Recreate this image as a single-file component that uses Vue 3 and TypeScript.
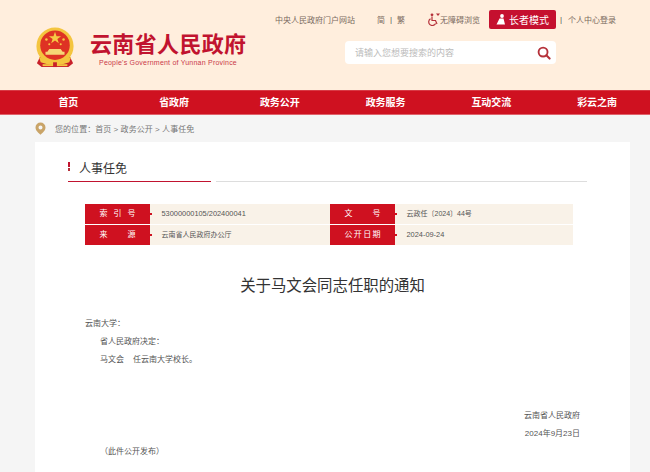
<script setup lang="ts">
const navItems: string[] = ['首页', '省政府', '政务公开', '政务服务', '互动交流', '彩云之南']
</script>

<template>
  <div class="page">
    <header class="header">
      <div class="brand">
        <svg class="emblem" width="40" height="42" viewBox="0 0 42 44">
          <path d="M6 30 L2 38 L7 42 H35 L40 38 L36 30 Z" fill="#c8202a" />
          <circle cx="21" cy="20" r="19.5" fill="#f4c53f" />
          <circle cx="21" cy="19" r="15.5" fill="#de3224" />
          <polygon points="21,5 22.6,9.6 27.4,9.6 23.5,12.5 25,17 21,14.2 17,17 18.5,12.5 14.6,9.6 19.4,9.6" fill="#f6c945" />
          <circle cx="12" cy="13" r="1.3" fill="#f6c945" />
          <circle cx="30" cy="13" r="1.3" fill="#f6c945" />
          <circle cx="15" cy="18" r="1.1" fill="#f6c945" />
          <circle cx="27" cy="18" r="1.1" fill="#f6c945" />
          <path d="M15 23 H27 L29 26 H31 V29 H11 V26 H13 Z" fill="#f6d675" />
          <path d="M4 31 Q21 42 38 31 L36 37 Q21 43 6 37 Z" fill="#f4c53f" />
          <path d="M8 39 H34 V41 H8 Z" fill="#f4c53f" />
          <path d="M19 37 H23 V42 H19 Z" fill="#c8202a" />
        </svg>
        <div class="brand-text">
          <div class="brand-cn">云南省人民政府</div>
          <div class="brand-en">People's Government of Yunnan Province</div>
        </div>
      </div>
      <div class="tools">
        <div class="toolbar">
          <span class="tool portal">中央人民政府门户网站</span>
          <span class="tool lang">简<i class="sep">|</i>繁</span>
          <span class="tool access">
            <svg width="12" height="13" viewBox="0 0 12 13">
              <circle cx="4" cy="1.8" r="1.4" fill="#b5313a" />
              <path d="M4 3.5 V7.5 H7.5 L9 11 M2.5 5.8 A3.6 3.6 0 1 0 7.6 10.4" fill="none" stroke="#b5313a" stroke-width="1.2" />
              <path d="M8 0.6 H12 L10 3 Z" fill="#b5313a" />
            </svg>
            无障碍浏览
          </span>
          <span class="elder">
            <svg width="10" height="11" viewBox="0 0 10 11">
              <circle cx="6" cy="2" r="1.9" fill="#fff" />
              <path d="M3.5 4.5 H7.5 L9 10.5 H0.5 Z" fill="#fff" />
            </svg>
            长者模式
          </span>
          <span class="tool login"><i class="sep login-sep">|</i>个人中心登录</span>
        </div>
        <div class="search">
          <span class="placeholder">请输入您想要搜索的内容</span>
          <svg width="14" height="14" viewBox="0 0 15 15">
            <circle cx="6.5" cy="6.5" r="4.8" fill="none" stroke="#b5313a" stroke-width="2" />
            <path d="M10 10 L13.5 13.5" stroke="#b5313a" stroke-width="2.2" stroke-linecap="round" />
          </svg>
        </div>
      </div>
    </header>

    <nav class="nav">
      <a v-for="item in navItems" :key="item" class="nav-item">{{ item }}</a>
    </nav>

    <div class="crumbs">
      <svg width="11" height="13" viewBox="0 0 11 13">
        <path d="M5.5 0.5 A5 5 0 0 1 10.5 5.5 C10.5 8.5 7.5 11 5.5 12.8 C3.5 11 0.5 8.5 0.5 5.5 A5 5 0 0 1 5.5 0.5 Z M5.5 3.5 A2 2 0 1 0 5.5 7.5 A2 2 0 1 0 5.5 3.5 Z" fill="#c9a468" fill-rule="evenodd" />
      </svg>
      <span class="crumb-text">您的位置：首页 &gt; 政务公开 &gt; 人事任免</span>
    </div>

    <main class="card">
      <div class="section-head">
        <div class="section-title">
          <span class="mark"><i></i><i></i></span>
          人事任免
        </div>
        <div class="section-line"></div>
      </div>

      <div class="meta">
        <div class="meta-row">
          <div class="label"><span class="spread">索 引 号</span></div>
          <div class="value num">53000000105/202400041</div>
          <div class="label"><span class="spread">文 号</span></div>
          <div class="value">云政任〔2024〕44号</div>
        </div>
        <div class="meta-row">
          <div class="label"><span class="spread">来 源</span></div>
          <div class="value">云南省人民政府办公厅</div>
          <div class="label"><span class="spread">公开日期</span></div>
          <div class="value num">2024-09-24</div>
        </div>
      </div>

      <h1 class="title">关于马文会同志任职的通知</h1>

      <div class="body">
        <p>云南大学：</p>
        <p class="indent">省人民政府决定：</p>
        <p class="indent">马文会&nbsp;&nbsp;&nbsp;&nbsp;任云南大学校长。</p>
        <p class="blank"></p>
        <p class="blank"></p>
        <p class="right">云南省人民政府</p>
        <p class="right">2024年9月23日</p>
        <p class="public">（此件公开发布）</p>
      </div>
    </main>
  </div>
</template>

<style>
html, body { margin: 0; padding: 0; overflow: hidden; background: #f5f5f5; }
</style>

<style scoped>
.page {
  width: 650px;
  height: 472px;
  overflow: hidden;
  background: #f5f5f5;
  font-family: "Liberation Sans", "Noto Sans CJK SC", sans-serif;
  color: #555;
}
.header {
  height: 90px;
  box-sizing: border-box;
  background: #ffeedd;
  display: flex;
  padding-left: 35px;
}
.brand {
  width: 310px;
  display: flex;
  align-items: flex-start;
  padding-top: 27px;
}
.emblem { flex: none; margin-right: 15px; }
.brand-text { margin-top: 5px; }
.brand-cn {
  font-size: 22px;
  line-height: 26px;
  font-weight: 700;
  color: #c1132f;
  letter-spacing: 0.35px;
  white-space: nowrap;
}
.brand-en {
  font-size: 7px;
  line-height: 10px;
  color: #c1132f;
  margin-left: 9px;
  letter-spacing: 0.22px;
  white-space: nowrap;
  opacity: 0.85;
}
.tools { flex: 1; }
.toolbar {
  display: flex;
  align-items: center;
  height: 20px;
  margin-top: 9px;
  margin-left: -70px;
  font-size: 8px;
  color: #7a6a60;
  white-space: nowrap;
}
.tool { display: inline-flex; align-items: center; }
.portal { width: 102px; }
.lang { width: 51px; }
.sep { font-style: normal; margin: 0 5px; color: #555; }
.access { width: 61px; gap: 0; }
.elder {
  width: 67px;
  height: 19px;
  box-sizing: border-box;
  display: inline-flex;
  align-items: center;
  justify-content: center;
  gap: 3px;
  background: #c5102f;
  color: #fff;
  font-size: 10px;
  border-radius: 2px;
}
.login-sep { margin: 0 6px 0 4px; }
.search {
  width: 211px;
  height: 23px;
  box-sizing: border-box;
  margin: 12px 0 0 0;
  padding: 0 5px 0 10px;
  background: #fff;
  border-radius: 4px;
  display: flex;
  align-items: center;
  justify-content: space-between;
}
.placeholder { font-size: 9px; color: #bbb; }
.nav {
  height: 25px;
  background: #cf1120;
  border-top: 1px solid #d83a45;
  border-bottom: 1px solid #e0626b;
  box-sizing: border-box;
  display: flex;
  padding-left: 15.5px;
}
.nav-item {
  width: 105.8px;
  text-align: center;
  color: #fff;
  font-size: 10px;
  font-weight: 700;
  line-height: 24px;
}
.crumbs {
  height: 27px;
  display: flex;
  align-items: center;
  padding-left: 35px;
  padding-bottom: 1px;
  box-sizing: border-box;
}
.crumb-text {
  margin-left: 9px;
  font-size: 8px;
  color: #777;
  letter-spacing: 0.05px;
}
.card {
  margin: 0 20px 0 35px;
  height: 330px;
  background: #fff;
  padding: 16px 43px 0 33px;
  box-sizing: border-box;
}
.section-head {
  display: flex;
  gap: 5px;
  align-items: flex-end;
}
.section-title {
  width: 143px;
  flex: none;
  box-sizing: border-box;
  height: 24px;
  border-bottom: 1px solid #c1132f;
  display: flex;
  align-items: flex-start;
  font-size: 12px;
  line-height: 22px;
  color: #333;
}
.mark {
  width: 2px;
  margin: 4px 9px 0 0;
  display: flex;
  flex-direction: column;
  gap: 1px;
}
.mark i { display: block; background: #c1132f; height: 5px; }
.mark i:last-child { height: 3px; background: #b5313a; }
.section-line {
  flex: 1;
  height: 1px;
  background: #ddd;
}
.meta {
  width: 488px;
  margin: 22px 0 0 17px;
  display: flex;
  flex-direction: column;
  gap: 1px;
}
.meta-row {
  display: grid;
  grid-template-columns: 65px 180px 65px 178px;
  height: 20px;
  background: #f9f2e8;
}
.label {
  position: relative;
  background: #cf1120;
  color: #fff;
  font-size: 8px;
  line-height: 20px;
  display: flex;
  justify-content: center;
}
.label::after {
  content: "";
  position: absolute;
  right: -2px;
  top: 9px;
  width: 2px;
  height: 2px;
  background: #cf1120;
}
.spread {
  width: 36px;
  text-align: justify;
  text-align-last: justify;
}
.value {
  font-size: 7px;
  line-height: 20px;
  color: #555;
  padding-left: 11.5px;
  white-space: nowrap;
}
.value.num { font-size: 7.4px; }
.title {
  margin: 29px 0 0;
  font-size: 15.4px;
  line-height: 24px;
  font-weight: 400;
  color: #333;
  text-align: center;
  transform: translateX(5px);
}
.body {
  margin: 16.5px 0 0 17px;
  font-size: 8px;
  line-height: 18.4px;
  color: #555;
}
.body p { margin: 0; }
.indent { padding-left: 15px; }
.blank { height: 18.4px; }
.right { text-align: right; width: 495px; }
.public { padding-left: 15px; }
</style>
